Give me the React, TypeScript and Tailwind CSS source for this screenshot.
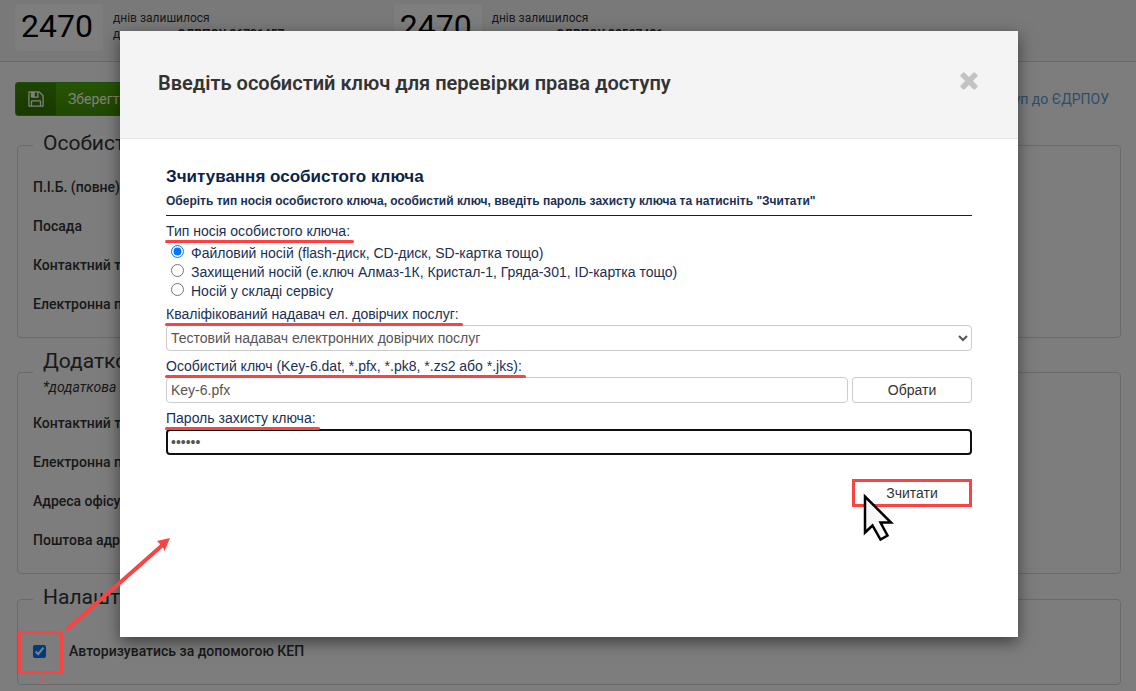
import { useState } from "react";

const DAYS = [
  { days: 2470, code: "ЄДРПОУ 36731457" },
  { days: 2470, code: "ЄДРПОУ 32527431" },
];

const CARRIERS = [
  { id: "file", label: "Файловий носій (flash-диск, CD-диск, SD-картка тощо)" },
  {
    id: "secure",
    label: "Захищений носій (е.ключ Алмаз-1К, Кристал-1, Гряда-301, ID-картка тощо)",
  },
  { id: "service", label: "Носій у складі сервісу" },
];

export default function App() {
  return (
    <div className="relative min-h-screen overflow-hidden bg-[#fbfbfb] font-[Roboto,sans-serif] text-[#333]">
      <TopBar />
      <main className="px-[15px] pt-5 pb-1">
        <Toolbar />
        <ProfileForm />
      </main>
      <div className="absolute inset-0 bg-black/50 pt-[31px] pr-[118px] pl-[120px]">
        <KeyDialog />
      </div>
      <Callouts />
    </div>
  );
}

/* ---------- Page ---------- */

function TopBar() {
  return (
    <header className="grid h-[62px] grid-cols-3 border-b border-[#d2d2d2] bg-[#f3f3f3]">
      {DAYS.map((item) => (
        <div key={item.code} className="flex px-[15px] pt-1">
          <div className="flex h-[47px] w-[88px] items-center justify-center rounded bg-[#fcfcfc] pr-1 pb-1 text-[32px] text-black">
            {item.days}
          </div>
          <div className="pt-[6px] pl-[10px] text-xs leading-4">
            <div>днів залишилося</div>
            <div>
              доступу до <b>{item.code}</b>
            </div>
          </div>
        </div>
      ))}
    </header>
  );
}

function Toolbar() {
  return (
    <div className="flex items-center justify-between pr-3">
      <button className="flex h-[34px] items-center overflow-hidden rounded-[3px] border border-[#3f9a1c] bg-linear-to-b from-[#4dab00] to-[#409000] text-sm text-white">
        <span className="flex h-full w-10 items-center justify-center bg-black/20">
          <SaveIcon />
        </span>
        <span className="px-3">Зберегти зміни</span>
      </button>
      <a href="#access" className="text-sm text-[#5b9bd5]">
        Запит на доступ до ЄДРПОУ
      </a>
    </div>
  );
}

function ProfileForm() {
  const [useKey, setUseKey] = useState(true);

  return (
    <form className="ml-[2px] flex flex-col gap-[10px] pt-[14px]">
      <Section title="Особисті дані">
        <Row label="П.І.Б. (повне)" />
        <Row label="Посада" />
        <Row label="Контактний телефон" />
        <Row label="Електронна пошта" />
      </Section>
      <Section title="Додаткові дані" note="*додаткова інформація">
        <Row label="Контактний телефон" />
        <Row label="Електронна пошта" />
        <Row label="Адреса офісу" />
        <Row label="Поштова адреса" />
      </Section>
      <Section title="Налаштування">
        <label className="mt-[10px] flex h-[39px] items-center text-sm font-medium">
          <input
            type="checkbox"
            checked={useKey}
            onChange={(e) => setUseKey(e.target.checked)}
            className="mt-[2px] mr-[23px] h-[13px] w-[13px]"
          />
          Авторизуватись за допомогою КЕП
        </label>
      </Section>
    </form>
  );
}

function Section({
  title,
  note,
  children,
}: {
  title: string;
  note?: string;
  children: React.ReactNode;
}) {
  return (
    <fieldset className="rounded border border-[#d5d5d5] px-[15px] pb-[14px]">
      <legend className="px-[10px] pt-px">
        <span className="mb-[5px] block text-[21px] leading-6">{title}</span>
        {note && <i className="block text-sm leading-[18px]">{note}</i>}
      </legend>
      <div className="pt-[7px]">{children}</div>
    </fieldset>
  );
}

function Row({ label }: { label: string }) {
  return (
    <div className="flex h-[39px] items-center text-sm font-medium">{label}</div>
  );
}

/* ---------- Dialog ---------- */

function KeyDialog() {
  const [carrier, setCarrier] = useState("file");
  const [password, setPassword] = useState("123456");

  return (
    <section
      role="dialog"
      aria-labelledby="dialog-title"
      className="bg-white shadow-[0_5px_15px_rgba(0,0,0,0.5)]"
    >
      <div className="flex h-[108px] items-start justify-between border-b border-[#e5e5e5] bg-[#f4f4f4] pt-9 pr-9 pl-[38px]">
        <h1 id="dialog-title" className="text-xl leading-8 font-semibold">
          Введіть особистий ключ для перевірки права доступу
        </h1>
        <button aria-label="Закрити" className="text-[#c3c3c3]">
          <CloseIcon />
        </button>
      </div>

      <div className="px-[46px] pt-7 pb-[130px] font-['Liberation_Sans',Arial,sans-serif] text-sm text-[#1a3054]">
        <h2 className="text-[17px] leading-5 font-bold text-[#0c2347]">
          Зчитування особистого ключа
        </h2>
        <p className="border-b border-[#0c2347] pt-1 pb-1 text-xs leading-5 font-bold">
          Оберіть тип носія особистого ключа, особистий ключ, введіть пароль захисту ключа та
          натисніть "Зчитати"
        </p>

        <div role="radiogroup" aria-labelledby="carrier-label" className="pt-[7px]">
          <div id="carrier-label" className="leading-4">
            <Marked>Тип носія особистого ключа:</Marked>
          </div>
          <div className="pt-1 pl-[5px]">
            {CARRIERS.map((c) => (
              <label key={c.id} className="flex h-[19px] items-center gap-[7px]">
                <input
                  type="radio"
                  name="carrier"
                  checked={carrier === c.id}
                  onChange={() => setCarrier(c.id)}
                  className="mb-[2px] h-[13px] w-[13px]"
                />
                {c.label}
              </label>
            ))}
          </div>
        </div>

        <label htmlFor="provider" className="mt-[6px] block leading-4">
          <Marked>Кваліфікований надавач ел. довірчих послуг:</Marked>
        </label>
        <select
          id="provider"
          className="mt-[3px] block h-[26px] w-full rounded border border-[#ccc] bg-white text-[#555]"
        >
          <option>Тестовий надавач електронних довірчих послуг</option>
        </select>

        <label htmlFor="key-file" className="mt-[7px] block leading-4">
          <Marked>Особистий ключ (Key-6.dat, *.pfx, *.pk8, *.zs2 або *.jks):</Marked>
        </label>
        <div className="mt-[3px] flex gap-1">
          <input
            id="key-file"
            readOnly
            value="Key-6.pfx"
            className="h-[26px] min-w-0 flex-1 rounded border border-[#ccc] px-1 text-[#555]"
          />
          <button className="h-[26px] w-[120px] rounded-[3px] border border-[#ccc] text-[#333]">
            Обрати
          </button>
        </div>

        <label htmlFor="password" className="mt-[7px] block leading-4">
          <Marked>Пароль захисту ключа:</Marked>
        </label>
        <input
          id="password"
          type="password"
          value={password}
          onChange={(e) => setPassword(e.target.value)}
          className="mt-[3px] block h-[26px] w-full rounded border-2 border-[#101010] px-[3px] text-[#555] outline-none"
        />

        <div className="flex justify-end pt-6">
          <button className="h-7 w-[120px] border-3 border-[#fc4242] text-[#333]">Зчитати</button>
        </div>
      </div>
    </section>
  );
}

// label text with a red marker stroke below it
function Marked({ children }: { children: React.ReactNode }) {
  return (
    <span className="relative inline-block">
      {children}
      <span className="absolute -right-1 -bottom-1 -left-px h-[3px] rounded-full bg-[#fc4242]" />
    </span>
  );
}

/* ---------- Drawings ---------- */

function Callouts() {
  return (
    <svg
      className="pointer-events-none absolute top-0 left-0"
      width="1136"
      height="691"
      viewBox="0 0 1136 691"
      aria-hidden="true"
    >
      <g fill="none" stroke="#fc4242">
        <rect x="19.5" y="632.5" width="42" height="40" strokeWidth="3" />
        <path d="M42.5 677v5" />
        <path d="M68 628.5L162 545.5" strokeWidth="4" strokeLinecap="round" />
      </g>
      <path d="M170 538L157 541L160.5 544.5L163.5 548.5L164.5 551Z" fill="#fc4242" />
      <path
        d="M865 496.5V532.5L872.5 525.5L880.5 539.5L887.5 535.5L880.5 522.5H891Z"
        fill="#f7f7f7"
        stroke="#000"
        strokeWidth="2.5"
      />
    </svg>
  );
}

function SaveIcon() {
  return (
    <svg width="18" height="18" viewBox="0 0 1792 1792" fill="currentColor" aria-hidden="true">
      <path d="M512 1536h768v-384h-768v384zm896 0h128v-896q0-14-10-38.5t-20-34.5l-281-281q-10-10-34-20t-39-10v416q0 40-28 68t-68 28h-576q-40 0-68-28t-28-68v-416h-128v1280h128v-416q0-40 28-68t68-28h832q40 0 68 28t28 68v416zm-384-928v-320q0-13-9.5-22.5t-22.5-9.5h-192q-13 0-22.5 9.5t-9.5 22.5v320q0 13 9.5 22.5t22.5 9.5h192q13 0 22.5-9.5t9.5-22.5zm640 32v928q0 40-28 68t-68 28h-1344q-40 0-68-28t-28-68v-1344q0-40 28-68t68-28h928q40 0 88 20t76 48l280 280q28 28 48 76t20 88z" />
    </svg>
  );
}

function CloseIcon() {
  return (
    <svg width="26" height="26" viewBox="0 0 1792 1792" fill="currentColor" aria-hidden="true">
      <path d="M1490 1322q0 40-28 68l-136 136q-28 28-68 28t-68-28l-294-294-294 294q-28 28-68 28t-68-28l-136-136q-28-28-28-68t28-68l294-294-294-294q-28-28-28-68t28-68l136-136q28-28 68-28t68 28l294 294 294-294q28-28 68-28t68 28l136 136q28 28 28 68t-28 68l-294 294 294 294q28 28 28 68z" />
    </svg>
  );
}
